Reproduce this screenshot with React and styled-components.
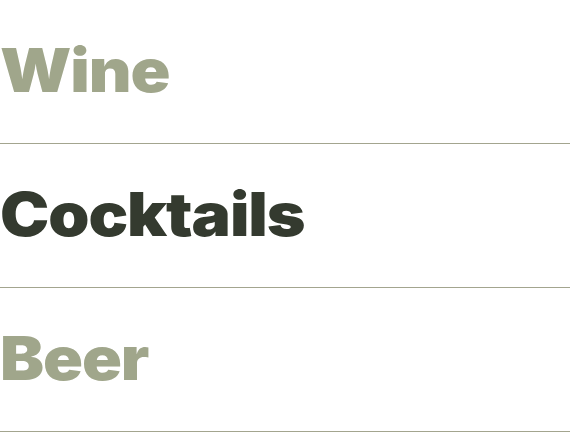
import React from 'react'
import styled, { createGlobalStyle } from 'styled-components'

const GlobalStyle = createGlobalStyle`
    html, body {
        margin: 0;
        padding: 0;
        background: #ffffff;
    }
    body {
        font-family: Inter, "Liberation Sans", Arial, sans-serif;
    }
`

const categories = [
    { id: 'wine', title: 'Wine', active: false },
    { id: 'cocktails', title: 'Cocktails', active: true },
    { id: 'beer', title: 'Beer', active: false },
]

function App() {
    return (
        <>
            <GlobalStyle />
            <MenuList>
                {categories.map((item) => (
                    <MenuRow key={item.id}>
                        <Title $active={item.active}>{item.title}</Title>
                    </MenuRow>
                ))}
            </MenuList>
        </>
    )
}

const MenuList = styled.ul`
    list-style: none;
    margin: 0;
    padding: 0;
    width: 570px;
    display: flex;
    flex-direction: column;
`

const MenuRow = styled.li`
    box-sizing: border-box;
    height: 144px;
    padding-top: 40px;
    border-bottom: 1px solid #a3a58f;
    display: flex;
    align-items: flex-start;
`

const Title = styled.span`
    display: inline-block;
    font-family: Inter, "Liberation Sans", Arial, sans-serif;
    font-weight: 900;
    font-size: 60px;
    line-height: 1;
    letter-spacing: -1px;
    transform: scaleX(1.1);
    transform-origin: left center;
    color: ${(p) => (p.$active ? '#343a2f' : '#a0a68b')};
    cursor: pointer;
`

export default App
